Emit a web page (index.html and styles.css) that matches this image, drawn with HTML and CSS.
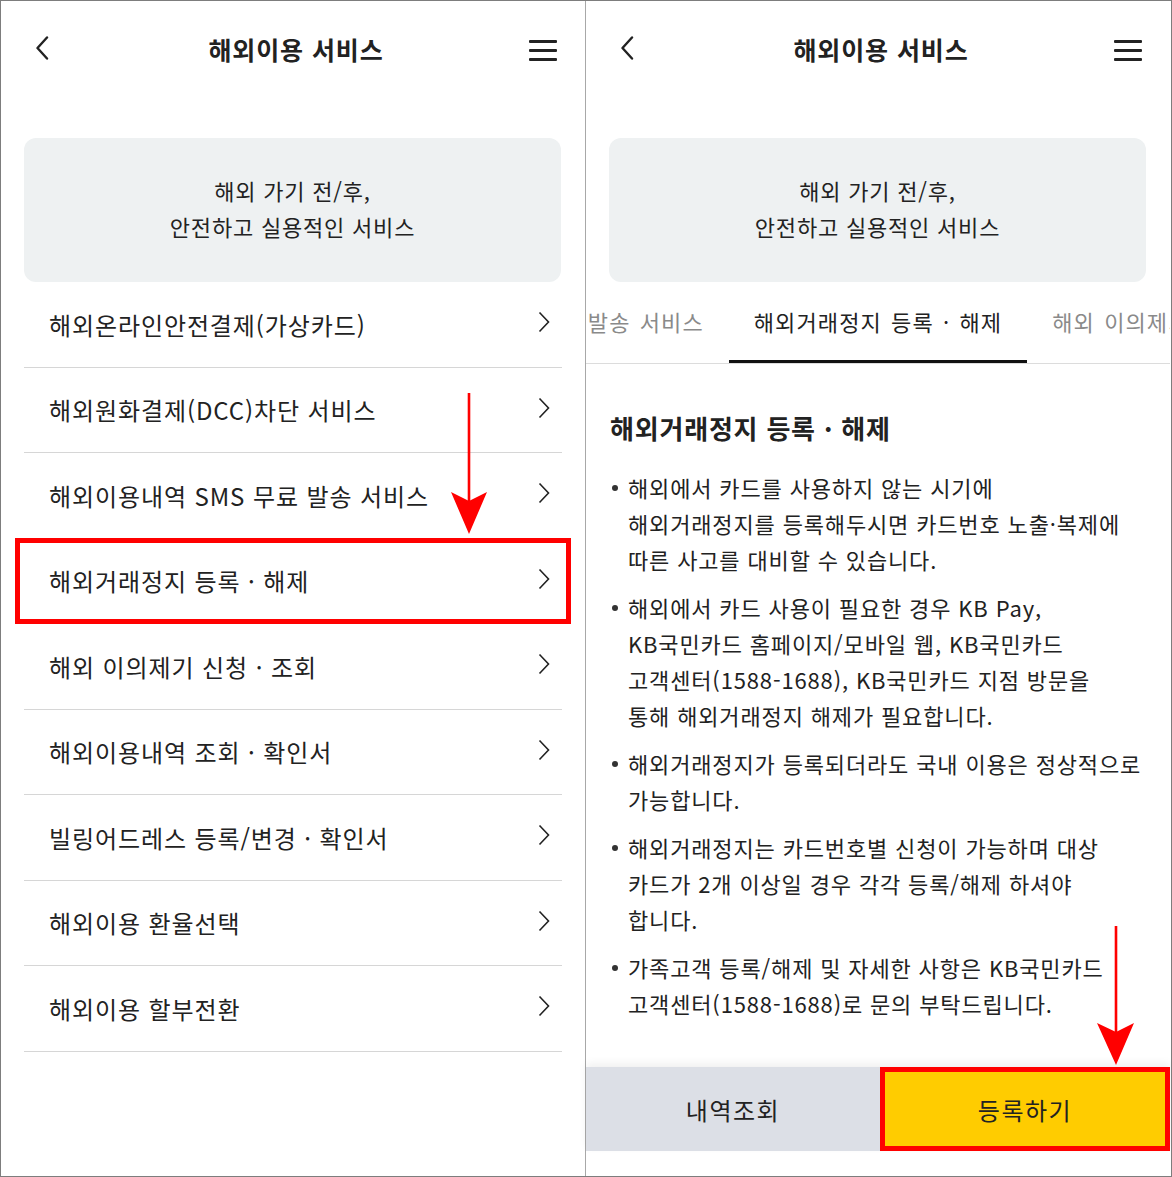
FILE: index.html
```html
<!DOCTYPE html>
<html lang="ko">
<head>
<meta charset="UTF-8">
<title>해외이용 서비스</title>
<link rel="stylesheet" href="styles.css">
</head>
<body>
<div class="screens">

  <!-- 왼쪽 화면: 서비스 목록 -->
  <div class="panel">
    <div class="topbar">
      <svg class="back" width="14" height="24" viewBox="0 0 14 24"><polyline points="12,1.5 2.5,12 12,22.5" fill="none" stroke="#222" stroke-width="2.4" stroke-linecap="round" stroke-linejoin="round"/></svg>
      <h1 class="title">해외이용 서비스</h1>
      <svg class="menu" width="28" height="21" viewBox="0 0 28 21"><rect x="0" y="0" width="28" height="3" rx="1" fill="#222"/><rect x="0" y="9" width="28" height="3" rx="1" fill="#222"/><rect x="0" y="18" width="28" height="3" rx="1" fill="#222"/></svg>
    </div>
    <div class="intro">해외 가기 전/후,<br>안전하고 실용적인 서비스</div>
    <ul class="menu-list">
      <li>해외온라인안전결제(가상카드)<svg class="arrow" width="12" height="22" viewBox="0 0 12 22"><polyline points="1.5,1.5 10.5,11 1.5,20.5" fill="none" stroke="#222" stroke-width="1.6"/></svg></li>
      <li>해외원화결제(DCC)차단 서비스<svg class="arrow" width="12" height="22" viewBox="0 0 12 22"><polyline points="1.5,1.5 10.5,11 1.5,20.5" fill="none" stroke="#222" stroke-width="1.6"/></svg></li>
      <li>해외이용내역 SMS 무료 발송 서비스<svg class="arrow" width="12" height="22" viewBox="0 0 12 22"><polyline points="1.5,1.5 10.5,11 1.5,20.5" fill="none" stroke="#222" stroke-width="1.6"/></svg></li>
      <li class="mark">해외거래정지 등록 · 해제<svg class="arrow" width="12" height="22" viewBox="0 0 12 22"><polyline points="1.5,1.5 10.5,11 1.5,20.5" fill="none" stroke="#222" stroke-width="1.6"/></svg></li>
      <li>해외 이의제기 신청 · 조회<svg class="arrow" width="12" height="22" viewBox="0 0 12 22"><polyline points="1.5,1.5 10.5,11 1.5,20.5" fill="none" stroke="#222" stroke-width="1.6"/></svg></li>
      <li>해외이용내역 조회 · 확인서<svg class="arrow" width="12" height="22" viewBox="0 0 12 22"><polyline points="1.5,1.5 10.5,11 1.5,20.5" fill="none" stroke="#222" stroke-width="1.6"/></svg></li>
      <li>빌링어드레스 등록/변경 · 확인서<svg class="arrow" width="12" height="22" viewBox="0 0 12 22"><polyline points="1.5,1.5 10.5,11 1.5,20.5" fill="none" stroke="#222" stroke-width="1.6"/></svg></li>
      <li>해외이용 환율선택<svg class="arrow" width="12" height="22" viewBox="0 0 12 22"><polyline points="1.5,1.5 10.5,11 1.5,20.5" fill="none" stroke="#222" stroke-width="1.6"/></svg></li>
      <li>해외이용 할부전환<svg class="arrow" width="12" height="22" viewBox="0 0 12 22"><polyline points="1.5,1.5 10.5,11 1.5,20.5" fill="none" stroke="#222" stroke-width="1.6"/></svg></li>
    </ul>
    <svg class="pointer pointer-left" width="40" height="142" viewBox="0 0 40 142"><rect x="17.7" y="0" width="2.6" height="112" fill="#f00"/><polygon points="1,99 19,108 37,99 19,141" fill="#f00"/></svg>
  </div>

  <!-- 오른쪽 화면: 해외거래정지 상세 -->
  <div class="panel panel-right">
    <div class="topbar">
      <svg class="back" width="14" height="24" viewBox="0 0 14 24"><polyline points="12,1.5 2.5,12 12,22.5" fill="none" stroke="#222" stroke-width="2.4" stroke-linecap="round" stroke-linejoin="round"/></svg>
      <h1 class="title">해외이용 서비스</h1>
      <svg class="menu" width="28" height="21" viewBox="0 0 28 21"><rect x="0" y="0" width="28" height="3" rx="1" fill="#222"/><rect x="0" y="9" width="28" height="3" rx="1" fill="#222"/><rect x="0" y="18" width="28" height="3" rx="1" fill="#222"/></svg>
    </div>
    <div class="intro">해외 가기 전/후,<br>안전하고 실용적인 서비스</div>

    <div class="tabs">
      <div class="tab-side tab-prev"><span class="tab">발송 서비스</span></div>
      <span class="tab active">해외거래정지 등록 · 해제</span>
      <div class="tab-side tab-next"><span class="tab">해외 이의제기</span></div>
    </div>

    <div class="content">
      <h2 class="heading">해외거래정지 등록 · 해제</h2>
      <ul class="notes">
        <li>해외에서 카드를 사용하지 않는 시기에<br>해외거래정지를 등록해두시면 카드번호 노출·복제에<br>따른 사고를 대비할 수 있습니다.</li>
        <li>해외에서 카드 사용이 필요한 경우 KB Pay,<br>KB국민카드 홈페이지/모바일 웹, KB국민카드<br>고객센터(1588-1688), KB국민카드 지점 방문을<br>통해 해외거래정지 해제가 필요합니다.</li>
        <li>해외거래정지가 등록되더라도 국내 이용은 정상적으로<br>가능합니다.</li>
        <li>해외거래정지는 카드번호별 신청이 가능하며 대상<br>카드가 2개 이상일 경우 각각 등록/해제 하셔야<br>합니다.</li>
        <li>가족고객 등록/해제 및 자세한 사항은 KB국민카드<br>고객센터(1588-1688)로 문의 부탁드립니다.</li>
      </ul>
    </div>

    <div class="actions">
      <button type="button" class="btn btn-gray">내역조회</button>
      <button type="button" class="btn btn-yellow">등록하기</button>
    </div>
    <svg class="pointer pointer-right" width="40" height="142" viewBox="0 0 40 142"><rect x="18.7" y="0" width="2.6" height="112" fill="#f00"/><polygon points="1,97 20,106 38,97 20,139" fill="#f00"/></svg>
  </div>

</div>
</body>
</html>
```

FILE: styles.css
```css
* {
	box-sizing: border-box;
}

body {
	margin: 0;
	background: #fff;
	color: #222;
	font-family: "Noto Sans CJK KR", "Noto Sans", sans-serif;
}

.screens {
	display: flex;
	width: 1172px;
	height: 1177px;
	border: 1px solid #7d7d7d;
	overflow: hidden;
}

.panel {
	position: relative;
	display: flex;
	flex-direction: column;
	width: 584px;
	height: 100%;
	background: #fff;
}

.panel-right {
	width: 585px;
	border-left: 1px solid #a8a8a8;
}

.topbar {
	display: grid;
	grid-template-columns: 1fr auto 1fr;
	align-items: center;
	height: 96px;
	padding: 0 28px 0 34px;
}

.back {
	justify-self: start;
	margin-top: -2px;
}

.menu {
	justify-self: end;
	margin-top: 2px;
}

.title {
	margin: 0;
	font-size: 25px;
	font-weight: 700;
	line-height: 32px;
	letter-spacing: 0.9px;
}

.intro {
	margin: 41px 24px 0 23px;
	height: 144px;
	padding-top: 34px;
	background: #eef1f2;
	border-radius: 12px;
	text-align: center;
	font-size: 22px;
	line-height: 36px;
	letter-spacing: 0.8px;
}

.menu-list {
	margin: 0 23px 0 23px;
	padding: 0;
	list-style: none;
}

.menu-list li {
	position: relative;
	display: flex;
	align-items: center;
	justify-content: space-between;
	height: 85.5px;
	padding: 0 12px 0 25px;
	border-bottom: 1px solid #d6d6d6;
	font-size: 24px;
	letter-spacing: 0.9px;
}

.menu-list .arrow {
	flex-shrink: 0;
	margin-top: -4px;
}

.menu-list .mark::after {
	content: "";
	position: absolute;
	top: -1px;
	bottom: -1px;
	left: -9px;
	right: -9px;
	border: 5px solid #f00;
}

.pointer {
	position: absolute;
}

.pointer-left {
	left: 449px;
	top: 392px;
}

.pointer-right {
	left: 510px;
	top: 925px;
}

/* tabs */
.tabs {
	display: grid;
	grid-template-columns: minmax(0, 1fr) auto minmax(0, 1fr);
	border-bottom: 1px solid #dcdcdc;
}

.tab-side {
	display: flex;
	overflow: hidden;
}

.tab-prev {
	justify-content: flex-end;
}

.tab {
	flex-shrink: 0;
	padding: 24px 25px 27px;
	font-size: 22px;
	line-height: 30px;
	color: #8a8a8a;
	white-space: nowrap;
	letter-spacing: 1.1px;
	word-spacing: 2px;
}

.tab.active {
	color: #222;
	padding-bottom: 24px;
	border-bottom: 3px solid #111;
}

.content {
	padding: 0 24px;
}

.heading {
	margin: 47px 0 0 0;
	font-size: 26px;
	font-weight: 700;
	line-height: 34px;
	letter-spacing: 0.8px;
}

.notes {
	margin: 24px 0 0 0;
	padding: 0;
	list-style: none;
}

.notes li {
	position: relative;
	margin-bottom: 12px;
	padding-left: 18px;
	font-size: 22px;
	line-height: 36px;
	letter-spacing: 0.85px;
	white-space: nowrap;
}

.notes li::before {
	content: "";
	position: absolute;
	left: 2px;
	top: 16px;
	width: 6px;
	height: 6px;
	border-radius: 50%;
	background: #333;
}

/* bottom buttons */
.actions {
	display: flex;
	margin-top: auto;
	margin-bottom: 25px;
	height: 84px;
	box-shadow: 0 -4px 8px rgba(0, 0, 0, 0.06);
}

.btn {
	flex: 1;
	border: 0;
	margin: 0;
	font-family: inherit;
	font-size: 24px;
	color: #222;
	letter-spacing: 1.5px;
}

.btn-gray {
	background: #dcdfe6;
	flex: 0 0 294px;
}

.btn-yellow {
	background: #ffcc00;
	border: 5px solid #f00;
}
```
